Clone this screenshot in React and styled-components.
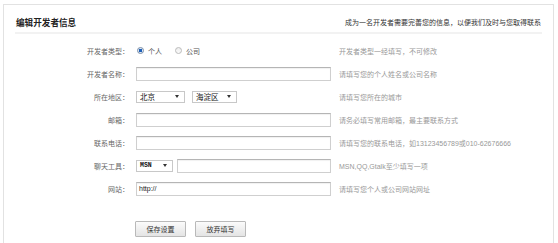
import React from "react";
import styled, { createGlobalStyle } from "styled-components";

const Global = createGlobalStyle`
  html, body { margin: 0; padding: 0; background: #fff; overflow: hidden; }
  body { font-family: "Liberation Sans", "Noto Sans CJK SC", sans-serif; }
  * { box-sizing: border-box; }
`;

const Panel = styled.div`
  margin: 4px 0 0 3px;
  width: 551px;
  height: 239px;
  border: 1px solid #e2e2e2;
  border-bottom: none;
  background: #fff;
`;

const Header = styled.div`
  margin: 0 11px;
  height: 29px;
  display: flex;
  align-items: flex-end;
  justify-content: space-between;
  padding: 0 1px 3px 1px;
  border-bottom: 2px solid #f2f2f2;
`;

const Title = styled.h2`
  margin: 0;
  font-size: 8.6px;
  line-height: 12px;
  font-weight: bold;
  color: #222;
`;

const Notice = styled.span`
  font-size: 7px;
  line-height: 12px;
  color: #333;
`;

const Form = styled.div`
  display: grid;
  grid-template-columns: 126px 195px 1fr;
  column-gap: 6px;
  grid-auto-rows: 23px;
  padding-top: 5px;
`;

const Label = styled.div`
  font-size: 7px;
  color: #666;
  text-align: right;
  align-self: center;
  padding-right: 1px;
`;

const Field = styled.div`
  display: flex;
  align-items: center;
  gap: ${(p) => p.$gap || 4}px;
  font-size: 7px;
  color: #333;
`;

const Hint = styled.div`
  font-size: 7px;
  color: #999;
  align-self: center;
  padding-left: 2px;
`;

const Input = styled.div`
  height: 14px;
  flex: 1;
  border: 1px solid #cfcfcf;
  border-top-color: #b5b5b5;
  box-shadow: inset 0 1px 1px rgba(0, 0, 0, 0.06);
  background: #fff;
  font-size: 7px;
  line-height: 12px;
  padding-left: 2px;
  color: #222;
`;

const Select = styled.div`
  width: ${(p) => p.$w}px;
  height: 12px;
  border: 1px solid #c8c8c8;
  background: #fff;
  display: flex;
  align-items: center;
  justify-content: space-between;
  padding: 0 5px 0 3px;
  font-size: ${(p) => (p.$mono ? 6.5 : 7.5)}px;
  font-family: ${(p) =>
    p.$mono ? '"Liberation Mono", monospace' : '"Noto Sans CJK SC", sans-serif'};
  font-weight: ${(p) => (p.$mono ? "bold" : "normal")};
  color: #111;
`;

const Caret = styled.span`
  width: 0;
  height: 0;
  border-left: 2.5px solid transparent;
  border-right: 2.5px solid transparent;
  border-top: 3px solid #333;
`;

const RadioGroup = styled.label`
  display: flex;
  align-items: center;
  gap: 4px;
  margin-left: 1px;
  margin-right: 8px;
  color: #555;
`;

const Radio = styled.span`
  width: 7px;
  height: 7px;
  border-radius: 50%;
  border: 1px solid ${(p) => (p.$on ? "#7a8ea8" : "#bbb")};
  background: ${(p) =>
    p.$on
      ? "radial-gradient(circle, #1d5fb8 0 1.6px, #dfe8f3 2px)"
      : "linear-gradient(#eee, #fafafa)"};
`;

const Actions = styled.div`
  grid-column: 2 / span 2;
  display: flex;
  gap: 9px;
  margin-left: -1px;
  margin-top: 21px;
  align-items: flex-start;
`;

const Button = styled.button`
  width: 51px;
  height: 16px;
  padding: 0;
  border: 1px solid #b9b9b9;
  border-radius: 1px;
  background: linear-gradient(#fbfbfb, #e4e4e4);
  font-family: "Noto Sans CJK SC", sans-serif;
  font-size: 7px;
  color: #333;
`;

const textRows = [
  { label: "邮箱：", hint: "请务必填写常用邮箱，最主要联系方式" },
  { label: "联系电话：", hint: "请填写您的联系电话，如13123456789或010-62676666" },
];

export default function App() {
  return (
    <>
      <Global />
      <Panel>
        <Header>
          <Title>编辑开发者信息</Title>
          <Notice>成为一名开发者需要完善您的信息，以便我们及时与您取得联系</Notice>
        </Header>
        <Form>
          <Label>开发者类型：</Label>
          <Field $gap={0}>
            <RadioGroup>
              <Radio $on />
              个人
            </RadioGroup>
            <RadioGroup>
              <Radio />
              公司
            </RadioGroup>
          </Field>
          <Hint>开发者类型一经填写，不可修改</Hint>

          <Label>开发者名称：</Label>
          <Field>
            <Input />
          </Field>
          <Hint>请填写您的个人姓名或公司名称</Hint>

          <Label>所在地区：</Label>
          <Field $gap={7}>
            <Select $w={49}>
              北京
              <Caret />
            </Select>
            <Select $w={45}>
              海淀区
              <Caret />
            </Select>
          </Field>
          <Hint>请填写您所在的城市</Hint>

          {textRows.map((r) => (
            <React.Fragment key={r.label}>
              <Label>{r.label}</Label>
              <Field>
                <Input />
              </Field>
              <Hint>{r.hint}</Hint>
            </React.Fragment>
          ))}

          <Label>聊天工具：</Label>
          <Field $gap={4}>
            <Select $w={37} $mono>
              MSN
              <Caret />
            </Select>
            <Input />
          </Field>
          <Hint>MSN,QQ,Gtalk至少填写一项</Hint>

          <Label>网站：</Label>
          <Field>
            <Input>http://</Input>
          </Field>
          <Hint>请填写您个人或公司网站网址</Hint>

          <Actions>
            <Button>保存设置</Button>
            <Button>放弃填写</Button>
          </Actions>
        </Form>
      </Panel>
    </>
  );
}
